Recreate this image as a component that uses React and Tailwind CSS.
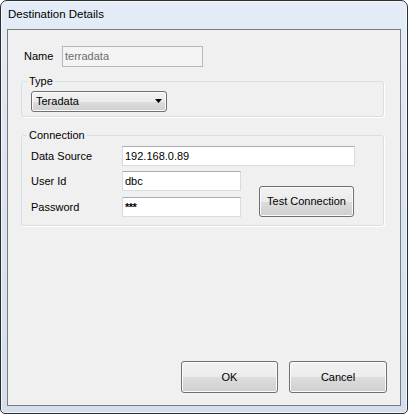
export default function App() {
  const font = { fontFamily: '"Liberation Sans", Arial, sans-serif' };
  const btn =
    "rounded-[3px] border border-[#707070] bg-[linear-gradient(#f2f2f2_0%,#ebebeb_50%,#dddddd_50%,#cfcfcf_100%)] shadow-[inset_0_0_0_1px_#fbfbfb] flex items-center justify-center text-[11px] text-black";
  const input =
    "h-[20px] border border-[#d7dbe2] border-t-[#abadb3] bg-white pl-[2px] flex items-center text-[11px] text-black leading-none";
  return (
    <div className="w-[408px] h-[414px] bg-white" style={font}>
      <div className="w-[408px] h-[414px] flex flex-col border border-[#2e2e2e] rounded-t-[7px] rounded-b-[5px] bg-[linear-gradient(180deg,#e4edf7_0%,#dbe6f2_40%,#d3dfec_100%)] shadow-[inset_0_0_0_1px_rgba(255,255,255,0.65)] px-[6px] pb-[7px]">
        <div className="h-[28px] flex items-center pl-[1px] text-[11.5px] text-black">
          Destination Details
        </div>
        <div className="flex-1 flex flex-col border border-[#7b7b7b] bg-[#f0f0f0]">
          {/* Name row */}
          <div className="mt-[16px] pl-[16px] flex items-center">
            <div className="w-[38px] text-[11px] text-black">Name</div>
            <div className="w-[141px] h-[21px] border border-[#b4b8bc] bg-[#f4f4f4] pl-[2px] flex items-center text-[11px] text-[#6d6d6d]">
              terradata
            </div>
          </div>

          {/* Type group */}
          <fieldset className="ml-[13px] mt-[7px] w-[363px] border border-[#d5dfe5] rounded-[3px] shadow-[1px_1px_0_#ffffff] pb-[4px]">
            <legend className="ml-[5px] px-[2px] text-[11px] leading-[14px] text-black">Type</legend>
            <div className="ml-[9px] mt-[3px] w-[136px] h-[21px] rounded-[3px] border border-[#707070] bg-[linear-gradient(#f2f2f2_0%,#ebebeb_50%,#dddddd_50%,#cfcfcf_100%)] shadow-[inset_0_0_0_1px_#fbfbfb] flex items-center justify-between pl-[4px] pr-[3px] text-[11px] text-black">
              <span>Teradata</span>
              <svg width="8" height="5" viewBox="0 0 8 5">
                <polygon points="0,0 7,0 3.5,4" fill="#000" />
              </svg>
            </div>
          </fieldset>

          {/* Connection group */}
          <fieldset className="ml-[13px] mt-[11px] w-[363px] border border-[#d5dfe5] rounded-[3px] shadow-[1px_1px_0_#ffffff] pb-[8px] pl-[9px]">
            <legend className="ml-[-4px] px-[2px] text-[11px] leading-[14px] text-black">Connection</legend>
            <div className="mt-[4px] flex items-center">
              <div className="w-[91px] text-[11px] text-black">Data Source</div>
              <div className={`${input} w-[233px]`}>192.168.0.89</div>
            </div>
            <div className="flex">
              <div className="flex flex-col">
                <div className="mt-[5px] flex items-center">
                  <div className="w-[91px] text-[11px] text-black">User Id</div>
                  <div className={`${input} w-[119px]`}>dbc</div>
                </div>
                <div className="mt-[6px] flex items-center">
                  <div className="w-[91px] text-[11px] text-black">Password</div>
                  <div className={`${input} w-[119px] text-[10px] font-bold tracking-[-0.5px]`}>***</div>
                </div>
              </div>
              <div className="self-end ml-[18px]">
                <div className={`${btn} w-[95px] h-[31px]`}>Test Connection</div>
              </div>
            </div>
          </fieldset>

          {/* Buttons */}
          <div className="mt-auto flex justify-end gap-[11px] pr-[13px] pb-[12px]">
            <div className={`${btn} w-[97px] h-[32px]`}>OK</div>
            <div className={`${btn} w-[98px] h-[32px]`}>Cancel</div>
          </div>
        </div>
      </div>
    </div>
  );
}
